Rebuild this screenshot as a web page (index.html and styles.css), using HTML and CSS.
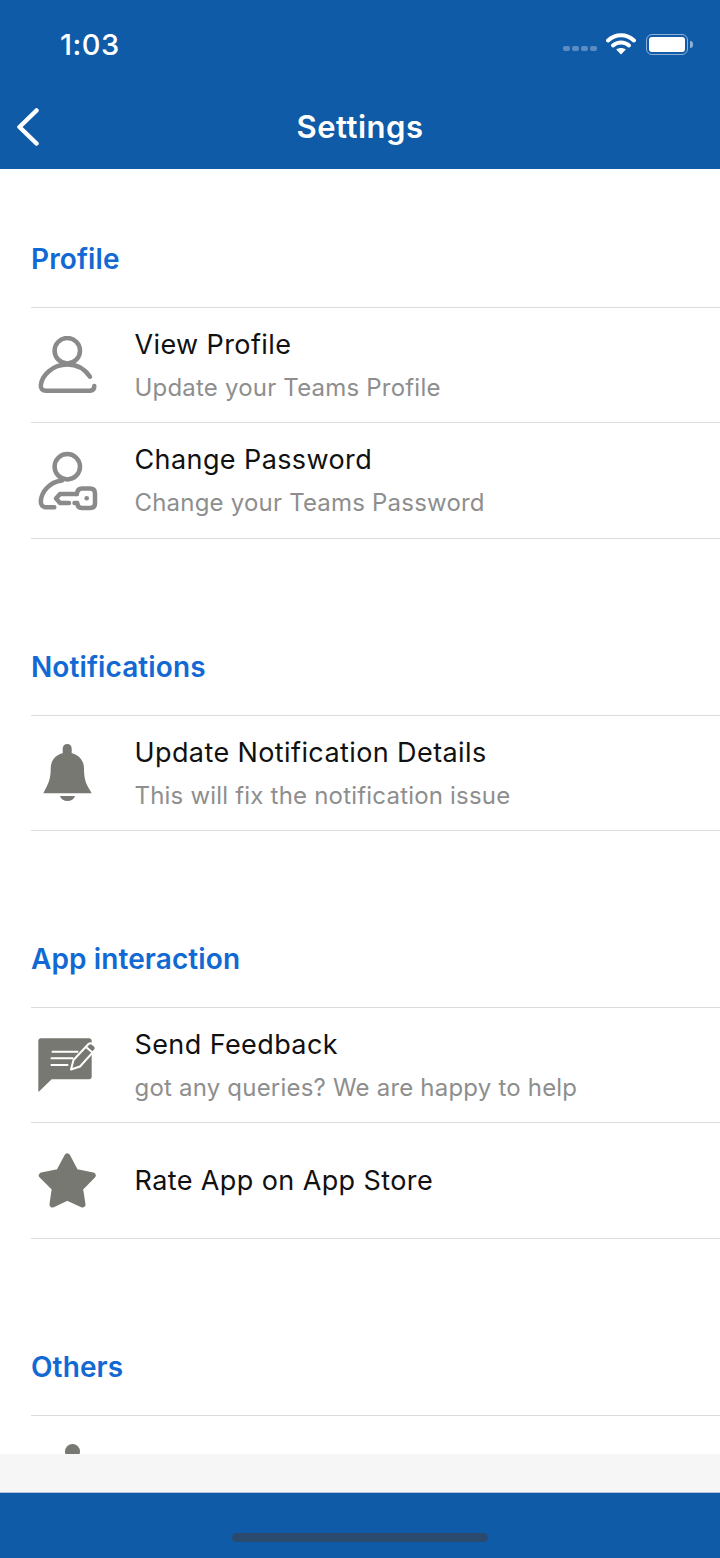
FILE: index.html
```html
<!DOCTYPE html>
<html lang="en">
<head>
    <meta charset="UTF-8">
    <meta name="viewport" content="width=device-width, initial-scale=1.0">
    <title>Settings</title>
    <link rel="stylesheet" href="styles.css">
</head>
<body>

    <!-- Header Section -->
    <header class="app-header">
        <div class="status-bar">
            <span class="status-time">1:03</span>
            <div class="status-icons">
                <div class="signal-dots"><i></i><i></i><i></i><i></i></div>
                <svg class="wifi" width="30" height="22" viewBox="0 0 30 22">
                    <path d="M2 7.5C9.5 0.5 20.5 0.5 28 7.5" class="wifi-arc"/>
                    <path d="M7 12.5C11.5 8.5 18.5 8.5 23 12.5" class="wifi-arc"/>
                    <path d="M15 21.5L10.2 16.6C13 14.6 17 14.6 19.8 16.6Z" fill="#fff"/>
                </svg>
                <div class="battery"><div class="battery-level"></div></div>
                <div class="battery-cap"></div>
            </div>
        </div>
        <nav class="nav-bar">
            <svg class="back" width="24" height="38" viewBox="0 0 24 38">
                <path d="M20.5 2.5L3.5 19L20.5 35.5"/>
            </svg>
            <h1>Settings</h1>
        </nav>
    </header>

    <main class="settings">

        <!-- Profile -->
        <section class="group">
            <h2>Profile</h2>
            <ul>
                <li class="row">
                    <svg class="icon line" viewBox="0 0 60 60">
                        <circle cx="29.3" cy="14.7" r="12.7"/>
                        <path d="M52 40.7C47 33.5 39 28.5 29.5 28.5C14 28.5 3.5 40 2.8 49.5C2.6 53 4.5 54.7 8 54.7H52C55 54.7 56.3 52.8 56.3 50"/>
                    </svg>
                    <div class="row-text">
                        <h3>View Profile</h3>
                        <p>Update your Teams Profile</p>
                    </div>
                </li>
                <li class="row">
                    <svg class="icon line" viewBox="0 0 60 60">
                        <circle cx="29.3" cy="15.7" r="12.7"/>
                        <path d="M24 29.5C11 31 3.5 41 2.8 50C2.6 54 4.5 56.3 8 56.3H16.3"/>
                        <path d="M38.8 43H22L18 47.5L22 52H31"/>
                        <path d="M38.8 43C39.2 39.5 41 37.5 44 37.5H52C55.5 37.5 57 39.5 57 42.5V52C57 55.5 55.5 57 52 57H44C41 57 39.5 55 39.3 52H36.5"/>
                        <circle class="key-hole" cx="48.7" cy="47.3" r="2.3"/>
                    </svg>
                    <div class="row-text">
                        <h3>Change Password</h3>
                        <p>Change your Teams Password</p>
                    </div>
                </li>
            </ul>
        </section>

        <!-- Notifications -->
        <section class="group">
            <h2>Notifications</h2>
            <ul>
                <li class="row">
                    <svg class="icon solid" viewBox="0 0 60 60">
                        <path d="M29.3 0C32 0 33.7 2 33.7 4.5V9.3C41 11 46 16.5 46 24.5C46 32 47 37 49.5 42L53.7 49.3H5.3L9 42C11.5 37 12.7 32 12.7 24.5C12.7 16.5 17.5 11 24.7 9.3V4.5C24.7 2 26.5 0 29.3 0Z"/>
                        <path d="M22 52H37C36 55.3 33 57 29.5 57C26 57 23 55.3 22 52Z"/>
                    </svg>
                    <div class="row-text">
                        <h3>Update Notification Details</h3>
                        <p>This will fix the notification issue</p>
                    </div>
                </li>
            </ul>
        </section>

        <!-- App interaction -->
        <section class="group">
            <h2>App interaction</h2>
            <ul>
                <li class="row">
                    <svg class="icon solid" viewBox="0 0 60 60">
                        <path d="M3 2.3H51C52.7 2.3 53.7 3.3 53.7 5V40.5C53.7 42.3 52.7 43.3 51 43.3H13.7L1 55.5C0.6 55.8 0.3 55.6 0.3 55V5C0.3 3.3 1.3 2.3 3 2.3Z"/>
                        <path class="pen-lines" d="M13.7 15.7H40.3M12.7 22.3H35.3M12.7 29H30.3"/>
                        <path class="pen" d="M33 33.5L35.5 24L50.5 8C52 6.8 53 7 54.2 7.8L57 10.2C58 11.4 58 12.6 57 13.8L42 30.5Z"/>
                        <path class="pen-lines" d="M48 11L54.5 16.5"/>
                    </svg>
                    <div class="row-text">
                        <h3>Send Feedback</h3>
                        <p>got any queries? We are happy to help</p>
                    </div>
                </li>
                <li class="row">
                    <svg class="icon solid star" viewBox="0 0 60 60">
                        <path d="M29.3 5.5L37.5 21L54.8 24.5L42 37.5L44.5 53.5L29.3 46.5L14.5 53.5L16.8 37.5L3.8 24.5L21 21Z"/>
                    </svg>
                    <div class="row-text">
                        <h3>Rate App on App Store</h3>
                    </div>
                </li>
            </ul>
        </section>

        <!-- Others -->
        <section class="group">
            <h2>Others</h2>
            <ul>
                <li class="row">
                    <svg class="icon solid" viewBox="0 0 60 60">
                        <circle cx="34.5" cy="7.5" r="7.5"/>
                    </svg>
                </li>
            </ul>
        </section>

    </main>

    <div class="tab-strip"></div>

    <!-- Footer Section -->
    <footer class="home-area">
        <div class="home-bar"></div>
    </footer>

</body>
</html>
```

FILE: styles.css
```css
* {
    box-sizing: border-box;
}

html, body {
    height: 100%;
}

body {
    font-family: Inter, "Noto Sans", Arial, sans-serif;
    margin: 0;
    padding: 0;
    height: 1558px;
    display: flex;
    flex-direction: column;
    overflow: hidden;
    background-color: white;
}

/* header */

.app-header {
    height: 169px;
    flex: none;
    background-color: #0f5ba7;
    color: white;
}

.status-bar {
    height: 84px;
    padding: 27px 27px 0 60px;
    display: flex;
    justify-content: space-between;
    align-items: flex-start;
}

.status-time {
    font-size: 29px;
    line-height: 36px;
    font-weight: 500;
    letter-spacing: 0.5px;
}

.status-icons {
    display: flex;
    align-items: center;
    margin-top: 6px;
}

.signal-dots {
    display: flex;
    gap: 2px;
    margin: 8px 9px 0 0;
}

.signal-dots i {
    width: 7px;
    height: 5px;
    border-radius: 2px;
    background-color: #5d8cc2;
}

.wifi {
    margin-right: 10px;
}

.wifi-arc {
    fill: none;
    stroke: white;
    stroke-width: 4px;
    stroke-linecap: round;
}

.battery {
    width: 42px;
    height: 21px;
    padding: 2px;
    border: 1.5px solid #8fb0d6;
    border-radius: 6px;
}

.battery-level {
    height: 100%;
    border-radius: 3px;
    background-color: white;
}

.battery-cap {
    width: 3px;
    height: 7px;
    margin-left: 2px;
    border-radius: 0 3px 3px 0;
    background-color: #8fb0d6;
}

.nav-bar {
    position: relative;
    height: 85px;
    display: flex;
    align-items: center;
    justify-content: center;
}

.nav-bar h1 {
    margin: 0;
    font-size: 31px;
    font-weight: 600;
    letter-spacing: 0.5px;
}

.back {
    position: absolute;
    left: 16px;
    top: 24px;
    fill: none;
    stroke: white;
    stroke-width: 4.5px;
    stroke-linecap: round;
    stroke-linejoin: round;
}

/* settings list */

.settings {
    flex: 1;
    overflow: hidden;
}

.group {
    margin-top: 111.5px;
}

.group:first-child {
    margin-top: 73px;
}

.group h2 {
    margin: 0 0 30.5px 31px;
    font-size: 28px;
    line-height: 34px;
    font-weight: 600;
    letter-spacing: 0.1px;
    color: #1269d3;
}

.group:first-child h2 {
    margin-bottom: 31px;
}

.group ul {
    list-style-type: none;
    margin: 0 0 0 31px;
    padding: 0;
    border-top: 1px solid #dcdcdc;
}

.row {
    height: 115.32px;
    padding: 2px 0 0 7px;
    display: flex;
    align-items: center;
    gap: 36.5px;
    border-bottom: 1px solid #dcdcdc;
}

.icon {
    width: 60px;
    height: 60px;
    flex: none;
}

.icon.line {
    fill: none;
    stroke: #8a8a8a;
    stroke-width: 4.5px;
    stroke-linecap: round;
    stroke-linejoin: round;
}

.icon.line .key-hole {
    fill: #8a8a8a;
    stroke: none;
}

.icon.solid {
    fill: #787872;
}

.icon.star {
    stroke: #787872;
    stroke-width: 6px;
    stroke-linejoin: round;
}

.pen-lines {
    fill: none;
    stroke: white;
    stroke-width: 2px;
}

.pen {
    stroke: white;
    stroke-width: 2px;
    stroke-linejoin: round;
}

.row-text h3 {
    margin: 0;
    font-size: 27px;
    line-height: 36px;
    font-weight: 400;
    letter-spacing: 0.4px;
    color: #111;
}

.row-text p {
    margin: 8px 0 0;
    font-size: 24px;
    line-height: 34px;
    letter-spacing: 0.2px;
    color: #8e8e8e;
}

/* bottom */

.tab-strip {
    height: 39px;
    flex: none;
    background-color: #f6f6f6;
    border-bottom: 1px solid #b5c3dc;
}

.home-area {
    height: 65px;
    flex: none;
    padding-top: 40px;
    background-color: #0f5ba7;
}

.home-bar {
    width: 256px;
    height: 9px;
    margin: 0 auto;
    border-radius: 5px;
    background-color: #2b4a6e;
}
```
